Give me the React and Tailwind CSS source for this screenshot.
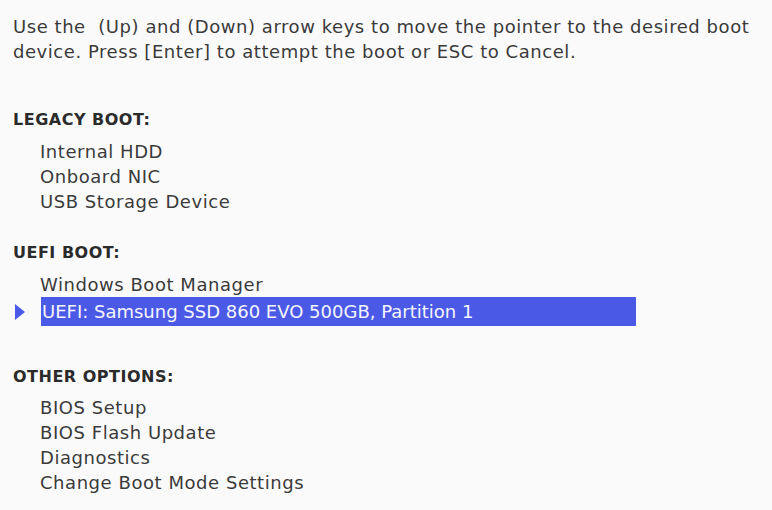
function Heading({ children, className = '' }) {
  return (
    <h2 className={`text-[16px] font-bold leading-[25px] tracking-[0.5px] text-[#2b2b2b] ${className}`}>
      {children}
    </h2>
  )
}

function Items({ items, className = '' }) {
  return (
    <ul className={`pl-[27px] ${className}`}>
      {items.map((item) => (
        <li key={item} className="leading-[25px]">{item}</li>
      ))}
    </ul>
  )
}

export default function App() {
  return (
    <main
      className="min-h-[510px] w-[772px] bg-[#fafafa] pl-[13px] pt-[14px] text-[18px] tracking-[0.55px] text-[#3a3a3a]"
      style={{ fontFamily: '"DejaVu Sans", "Open Sans", sans-serif' }}
    >
      <p className="leading-[25px]">
        Use the&nbsp; (Up) and (Down) arrow keys to move the pointer to the desired boot
        <br />
        device. Press [Enter] to attempt the boot or ESC to Cancel.
      </p>

      <Heading className="mt-[43px]">LEGACY BOOT:</Heading>
      <Items className="mt-[7px]" items={['Internal HDD', 'Onboard NIC', 'USB Storage Device']} />

      <Heading className="mt-[26px]">UEFI BOOT:</Heading>
      <Items className="mt-[7px]" items={['Windows Boot Manager']} />
      <div className="flex h-[29px] items-center">
        <svg viewBox="0 0 10 16" className="ml-[2px] h-[16px] w-[10px] text-[#4b5ae6]" aria-hidden="true">
          <path d="M0 0 L10 8 L0 16 Z" fill="currentColor" />
        </svg>
        <span className="ml-[16px] flex h-full w-[595px] items-center bg-[#4b5ae6] pl-px leading-[25px] tracking-normal text-[#f4f5ff]">
          UEFI: Samsung SSD 860 EVO 500GB, Partition 1
        </span>
      </div>

      <Heading className="mt-[38px]">OTHER OPTIONS:</Heading>
      <Items
        className="mt-[6px]"
        items={['BIOS Setup', 'BIOS Flash Update', 'Diagnostics', 'Change Boot Mode Settings']}
      />
    </main>
  )
}
